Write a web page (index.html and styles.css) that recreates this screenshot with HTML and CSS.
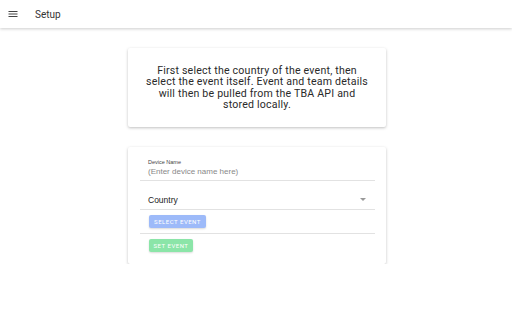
FILE: index.html
```html
<!DOCTYPE html>
<html>
<head>
<meta charset="utf-8">
<link rel="stylesheet" href="styles.css">
</head>
<body>
<header class="appbar">
  <svg class="menu" viewBox="0 0 24 24" width="12" height="12"><path d="M3 6h18v2H3zM3 11h18v2H3zM3 16h18v2H3z" fill="#444"/></svg>
  <span class="title">Setup</span>
</header>
<main class="content">
  <section class="card intro">
    <p>First select the country of the event, then select the event itself. Event and team details will then be pulled from the TBA API and stored locally.</p>
  </section>
  <section class="card form">
    <div class="field">
      <label class="label">Device Name</label>
      <div class="placeholder">(Enter device name here)</div>
    </div>
    <div class="field select">
      <span class="value">Country</span>
      <svg class="caret" viewBox="0 0 10 5" width="6" height="3"><path d="M0 0h10L5 5z" fill="#999"/></svg>
    </div>
    <div class="btnrow first">
      <button class="btn blue">Select Event</button>
    </div>
    <div class="btnrow second">
      <button class="btn green">Set Event</button>
    </div>
  </section>
</main>
</body>
</html>
```
FILE: styles.css
```css
html, body { margin: 0; padding: 0; background: #fff; font-family: "Liberation Sans", Arial, sans-serif; }
.appbar {
  height: 28px;
  display: flex;
  align-items: center;
  background: #fff;
  box-shadow: 0 1px 3px rgba(0,0,0,0.2);
  padding-left: 7px;
}
.menu { display: block; }
.title { margin-left: 16px; font-size: 10px; color: #333; font-family: Roboto, "Liberation Sans", sans-serif; }
.content { display: flex; flex-direction: column; align-items: center; padding-top: 20px; }
.card {
  width: 258px;
  background: #fff;
  box-shadow: 0 1px 3px rgba(0,0,0,0.25);
  border-radius: 2px;
  box-sizing: border-box;
}
.intro { height: 79px; display: flex; align-items: center; justify-content: center; margin-left: 2px; }
.intro p { margin: 0; width: 228px; text-align: center; font-family: Roboto, "Liberation Sans", sans-serif; font-size: 10.6px; line-height: 11.5px; color: #2a2a2a; letter-spacing: 0.2px; }
.form { margin-top: 20px; margin-left: 2px; padding: 12px 11px 7px 12px; }
.field { border-bottom: 1px solid #e2e2e2; padding-left: 8px; }
.label { display: block; font-size: 5.5px; color: #444; line-height: 7px; }
.placeholder { font-size: 8px; color: #888; line-height: 10px; padding-bottom: 3px; padding-top: 1px; }
.select { display: flex; align-items: center; justify-content: space-between; height: 29px; box-sizing: border-box; padding-top: 9px; padding-right: 9px; }
.value { font-size: 8.5px; color: #222; }
.caret { display: block; }
.btnrow { padding-left: 9px; }
.first { padding-top: 5px; padding-bottom: 5px; border-bottom: 1px solid #e2e2e2; }
.second { padding-top: 5px; padding-bottom: 5px; }
.btn {
  border: none;
  border-radius: 2px;
  color: #fff;
  font-family: Roboto, "Liberation Sans", sans-serif;
  font-size: 6px;
  letter-spacing: 0.5px;
  text-transform: uppercase;
  height: 13px;
  padding: 0 4px;
  box-shadow: 0 1px 2px rgba(0,0,0,0.15);
  display: block;
}
.blue { background: #9dbaf9; width: 57px; }
.green { background: #8be5a8; width: 44px; }
```
